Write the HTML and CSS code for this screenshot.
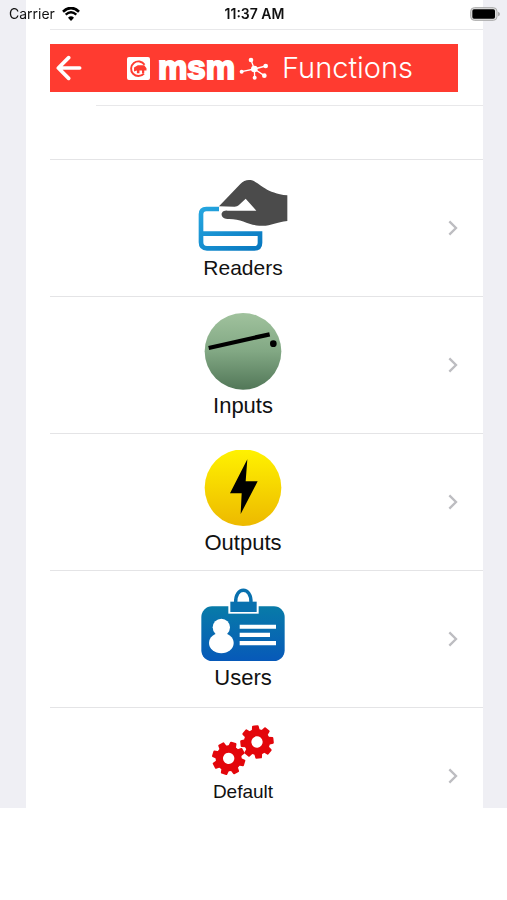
FILE: index.html
```html
<!DOCTYPE html>
<html lang="en">
<head>
<meta charset="utf-8">
<meta name="viewport" content="width=device-width, initial-scale=1">
<title>Functions</title>
<link rel="stylesheet" href="styles.css">
</head>
<body>
<div class="status">
  <div class="carrier">
    <span>Carrier</span>
    <svg class="wifi" viewBox="0 0 54 42" aria-hidden="true">
      <path d="M3 14Q27-8 51 14" fill="none" stroke="#000" stroke-width="8"/>
      <path d="M11 23Q27 9 43 23" fill="none" stroke="#000" stroke-width="7"/>
      <path d="M18 32Q27 24 36 32L27 42Z"/>
    </svg>
  </div>
  <time class="clock">11:37 AM</time>
  <svg class="battery" viewBox="0 0 90 42" aria-hidden="true">
    <rect x="2" y="2" width="79" height="38" rx="11" fill="#ddd" stroke="#aaa" stroke-width="3"/>
    <rect x="7" y="7" width="68" height="28" rx="5"/>
    <path d="M84 14Q90 16 90 21T84 28Z" fill="#aaa"/>
  </svg>
</div>
<div class="screen">
  <main class="panel">
    <header class="header">
      <div class="bar">
        <button class="back" type="button" aria-label="Back">
          <svg viewBox="0 0 78 78" aria-hidden="true"><path d="M71 39H8M38 8L7 39L38 70" fill="none" stroke="#fff" stroke-width="11" stroke-linecap="round" stroke-linejoin="round"/></svg>
        </button>
        <svg class="mark" viewBox="0 0 72 72" aria-hidden="true">
          <rect width="72" height="72" rx="6" fill="#fff"/>
          <path d="M55 24A23 23 0 1 0 53 52" fill="none" stroke="#ff3b30" stroke-width="6"/>
          <path d="M22 33L34 26L54 26L61 35V42H54V51H47V42H39V51H31V42L22 45Z" fill="#ff3b30"/>
        </svg>
        <span class="brand">msm</span>
        <svg class="network" viewBox="388 45 90 72" aria-hidden="true">
          <path d="M396 92L434 84L424 57M434 84L468 75M434 84L464 104M434 84L435 110" fill="none" stroke="#fff" stroke-width="4"/>
          <g fill="#fff"><circle cx="434" cy="84" r="10"/><circle cx="396" cy="92" r="6"/><circle cx="424" cy="57" r="7"/><circle cx="468" cy="75" r="7"/><circle cx="464" cy="104" r="7"/><circle cx="435" cy="110" r="6"/></g>
        </svg>
        <h1 class="title">Functions</h1>
      </div>
    </header>
    <div class="spacer"></div>
    <nav class="list">
      <a class="row" href="#readers">
        <span class="item">
          <svg class="icon" viewBox="45 33 288 234" aria-hidden="true">
            <defs><linearGradient id="card" x1="0" y1="0" x2="1" y2="1"><stop offset="0" stop-color="#25a5df"/><stop offset="1" stop-color="#0878c0"/></linearGradient></defs>
            <path d="M117 132H79Q63 132 63 148V232Q63 250 81 250H223Q240 250 240 233V206H63" fill="none" stroke="url(#card)" stroke-width="14"/>
            <path d="M117 124L181 57Q194 43 211 45C240 50 248 82 322 91V168C286 171 272 185 238 182C204 180 182 160 142 162C124 162 119 143 132 138Q136 136 143 137L229 137L197 101L176 121Q172 125 164 125Z" fill="#4b4b4b"/>
          </svg>
          <span class="label label-mid">Readers</span>
        </span>
        <svg class="chevron" viewBox="0 0 30 48" aria-hidden="true"><path d="M4 4L24 24L4 44"/></svg>
      </a>
      <a class="row" href="#inputs">
        <span class="item">
          <svg class="icon" viewBox="45 39 288 234" aria-hidden="true">
            <defs><linearGradient id="green" x1="0" y1="0" x2="0" y2="1"><stop offset="0" stop-color="#a0c29d"/><stop offset=".5" stop-color="#82a884"/><stop offset="1" stop-color="#527758"/></linearGradient></defs>
            <circle cx="189" cy="154" r="115" fill="url(#green)"/>
            <path d="M86 144L269 103" stroke="#000" stroke-width="13"/>
            <circle cx="280" cy="131" r="10"/>
          </svg>
          <span class="label">Inputs</span>
        </span>
        <svg class="chevron" viewBox="0 0 30 48" aria-hidden="true"><path d="M4 4L24 24L4 44"/></svg>
      </a>
      <a class="row" href="#outputs">
        <span class="item">
          <svg class="icon" viewBox="45 43 288 234" aria-hidden="true">
            <defs><linearGradient id="yellow" x1="0" y1="0" x2="0" y2="1"><stop offset="0" stop-color="#fff200"/><stop offset="1" stop-color="#edb900"/></linearGradient></defs>
            <circle cx="189" cy="156" r="115" fill="url(#yellow)"/>
            <path d="M202 71L150 173H185L182 235L233 137H197Z"/>
          </svg>
          <span class="label">Outputs</span>
        </span>
        <svg class="chevron" viewBox="0 0 30 48" aria-hidden="true"><path d="M4 4L24 24L4 44"/></svg>
      </a>
      <a class="row" href="#users">
        <span class="item">
          <svg class="icon icon-users" viewBox="45 36 288 228" aria-hidden="true">
            <defs><linearGradient id="blue" x1="0" y1="0" x2="0" y2="1"><stop offset="0" stop-color="#087ba8"/><stop offset="1" stop-color="#0759b9"/></linearGradient></defs>
            <rect x="64" y="94" width="250" height="164" rx="32" fill="url(#blue)"/>
            <path d="M145 76H236V116H145Z" fill="#fff"/>
            <path d="M151 80H230V111H151Z" fill="#0870ae"/>
            <path d="M167 84C164 33 216 33 213 84" fill="none" stroke="#0870ae" stroke-width="10"/>
            <g fill="#fff"><circle cx="124" cy="157" r="26"/><ellipse cx="124" cy="204" rx="37" ry="31"/><path d="M179 149H288V161H179ZM179 173H270V186H179ZM179 198H288V211H179Z"/></g>
          </svg>
          <span class="label">Users</span>
        </span>
        <svg class="chevron" viewBox="0 0 30 48" aria-hidden="true"><path d="M4 4L24 24L4 44"/></svg>
      </a>
      <a class="row" href="#default">
        <span class="item">
          <svg class="icon icon-gears" viewBox="45 42 288 162" aria-hidden="true">
            <defs>
              <g id="gear">
                <circle r="28" fill="none" stroke="#e3060b" stroke-width="22"/>
                <g fill="#e3060b" stroke="#e3060b" stroke-width="6" stroke-linejoin="round">
                  <path id="tooth" d="M-9-34L-7-47H7L9-34Z"/>
                  <use href="#tooth" transform="rotate(45)"/><use href="#tooth" transform="rotate(90)"/><use href="#tooth" transform="rotate(135)"/><use href="#tooth" transform="rotate(180)"/><use href="#tooth" transform="rotate(225)"/><use href="#tooth" transform="rotate(270)"/><use href="#tooth" transform="rotate(315)"/>
                </g>
              </g>
            </defs>
            <use href="#gear" transform="translate(146 145) rotate(-28)"/>
            <use href="#gear" transform="translate(231 96) rotate(-6)"/>
          </svg>
          <span class="label label-small">Default</span>
        </span>
        <svg class="chevron" viewBox="0 0 30 48" aria-hidden="true"><path d="M4 4L24 24L4 44"/></svg>
      </a>
    </nav>
  </main>
</div>
</body>
</html>
```
FILE: styles.css
```css
* { box-sizing: border-box; }

body {
  margin: 0;
  background: #fff;
  color: #111;
  font-family: "Liberation Sans", Arial, sans-serif;
}

svg { display: block; flex: none; }

.status {
  position: absolute;
  inset: 0 0 auto;
  z-index: 1;
  display: grid;
  grid-template-columns: 1fr auto 1fr;
  align-items: center;
  height: 27px;
  padding: 0 7px 0 9px;
  font-family: Inter, sans-serif;
  font-size: 14px;
}

.carrier { display: flex; align-items: center; gap: 7px; }
.wifi { width: 18px; height: 14px; }
.clock { font-size: 14px; font-weight: 600; }
.battery { width: 30px; height: 14px; justify-self: end; }

.screen {
  height: calc(100vh - 92px);
  padding: 0 24px 0 26px;
  overflow-y: auto;
  scrollbar-width: none;
  background: #efeff4;
}

.panel {
  padding: 29px 0 0 24px;
  background: #fff;
}

.header {
  padding: 14px 25px 13px 0;
  border-top: 1px solid #e8e8ea;
}

.bar {
  display: flex;
  align-items: center;
  height: 48px;
  padding-left: 6px;
  background: #ff3b30;
  color: #fff;
}

.back {
  width: 26px;
  height: 26px;
  margin-right: 45px;
  padding: 0;
  border: 0;
  background: none;
}

.back svg { width: 26px; height: 26px; }
.mark { width: 23px; height: 23px; margin-right: 8px; }

.brand {
  width: 81px;
  font-size: 33px;
  font-weight: 700;
  line-height: 48px;
  -webkit-text-stroke: 2px #fff;
}

.network { width: 30px; height: 24px; margin-right: 13px; }

.title {
  margin: 0;
  font-family: Inter, sans-serif;
  font-size: 29px;
  font-weight: 300;
  line-height: 48px;
}

.spacer {
  height: 54px;
  margin-left: 46px;
  border-top: 1px solid #e8e8ea;
}

.row {
  display: grid;
  grid-template-columns: 1fr 10px;
  gap: 12px;
  height: 137px;
  padding-right: 25px;
  border-top: 1px solid #e4e4e6;
  color: inherit;
  text-decoration: none;
}

.item {
  display: flex;
  flex-direction: column;
  align-items: center;
  padding-top: 16px;
}

.icon { width: 96px; height: 78px; }
.icon-users { height: 76px; }
.icon-gears { height: 54px; }

.label { font-size: 22px; line-height: 30px; }
.label-mid { font-size: 21px; line-height: 28px; }
.label-small { font-size: 19px; line-height: 28px; }

.chevron {
  align-self: center;
  width: 10px;
  height: 16px;
  fill: none;
  stroke: #bdbdc1;
  stroke-width: 7;
}
```
